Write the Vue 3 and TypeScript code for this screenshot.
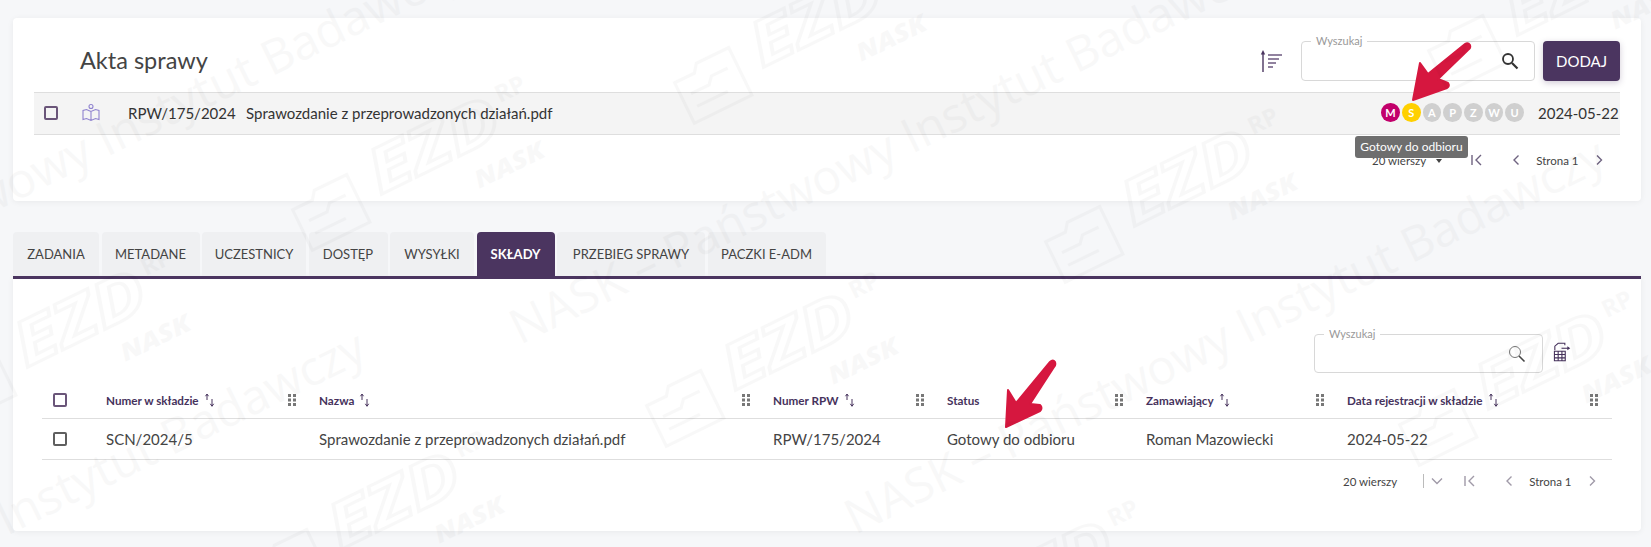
<script setup lang="ts">
interface Mark { x: number; y: number }
interface Line { x: number; y: number }

const tabs = ['ZADANIA', 'METADANE', 'UCZESTNICY', 'DOSTĘP', 'WYSYŁKI', 'SKŁADY', 'PRZEBIEG SPRAWY', 'PACZKI E-ADM']
const activeTab = 'SKŁADY'

const steps = [
  { letter: 'M', state: 'done' },
  { letter: 'S', state: 'current' },
  { letter: 'A', state: '' },
  { letter: 'P', state: '' },
  { letter: 'Z', state: '' },
  { letter: 'W', state: '' },
  { letter: 'U', state: '' },
]

const columns = [
  { label: 'Numer w składzie', sort: true },
  { label: 'Nazwa', sort: true },
  { label: 'Numer RPW', sort: true },
  { label: 'Status', sort: false },
  { label: 'Zamawiający', sort: true },
  { label: 'Data rejestracji w składzie', sort: true },
]

const row = ['SCN/2024/5', 'Sprawozdanie z przeprowadzonych działań.pdf', 'RPW/175/2024', 'Gotowy do odbioru', 'Roman Mazowiecki', '2024-05-22']

// watermark is a free canvas, so these are real coordinates
const lines: Line[] = [
  { x: -285, y: 348 },
  { x: 520, y: 345 },
  { x: 855, y: 535 },
  { x: -385, y: 727 },
]

const marks: Mark[] = [
  { x: 380, y: 195 },
  { x: 762, y: 68 },
  { x: 1133, y: 227 },
  { x: 1516, y: 36 },
  { x: 26, y: 368 },
  { x: 734, y: 391 },
  { x: 1487, y: 410 },
  { x: 340, y: 550 },
  { x: 993, y: 619 },
]
</script>

<template>
  <div class="page">
    <section class="card top-card">
      <header class="top-header">
        <h1 class="title">Akta sprawy</h1>
        <div class="top-tools">
          <svg class="sort-icon" width="24" height="26" viewBox="0 0 24 26">
            <path d="M4 24V4" fill="none" stroke="#4b3560" stroke-width="1.400" />
            <path d="M1.800 6.500 4 2l2.200 4.500z" fill="#4b3560" />
            <path d="M9 7h14M9 11h11M9 15h8M9 19h5" stroke="#6d5a80" stroke-width="1.500" />
          </svg>
          <div class="search search-top">
            <span class="search-label">Wyszukaj</span>
            <svg width="18" height="18" viewBox="0 0 18 18">
              <circle cx="7" cy="7" r="5" fill="none" stroke="#333" stroke-width="1.800" />
              <path d="M11 11l5.500 5.500" stroke="#333" stroke-width="2.200" />
            </svg>
          </div>
          <button class="add-btn">DODAJ</button>
        </div>
      </header>

      <div class="file-row">
        <span class="check check-purple"></span>
        <svg class="book" width="20" height="20" viewBox="0 0 20 20">
          <g fill="none" stroke="#9083cf" stroke-width="1.100">
            <circle cx="10" cy="3.500" r="2" />
            <path d="M10 8.500 5.500 6.500 2 7.500v9l3.500-1 4.500 2 4.500-2 3.500 1v-9l-3.500-1zM10 8.500v9" />
          </g>
        </svg>
        <span class="file-number">RPW/175/2024</span>
        <span class="file-name">Sprawozdanie z przeprowadzonych działań.pdf</span>
        <div class="steps">
          <span v-for="s in steps" :key="s.letter" class="step" :class="s.state">{{ s.letter }}</span>
        </div>
        <span class="file-date">2024-05-22</span>
      </div>

      <div class="pager pager-top">
        <span class="rows">20 wierszy</span>
        <span class="caret"></span>
        <svg class="pg pg-first" width="14" height="14" viewBox="0 0 14 14"><path d="M2 2v10M11 2 6 7l5 5" /></svg>
        <svg class="pg pg-prev" width="14" height="14" viewBox="0 0 14 14"><path d="M9.500 2.500 5 7l4.500 4.500" /></svg>
        <span class="page-no">Strona 1</span>
        <svg class="pg pg-next" width="14" height="14" viewBox="0 0 14 14"><path d="M5 2.500 9.500 7 5 11.500" /></svg>
      </div>

      <div class="tooltip">Gotowy do odbioru</div>
    </section>

    <nav class="tabs">
      <button v-for="t in tabs" :key="t" class="tab" :class="{ active: t === activeTab }">{{ t }}</button>
    </nav>

    <section class="card bottom-card">
      <div class="table-tools">
        <div class="search search-bottom">
          <span class="search-label">Wyszukaj</span>
          <svg width="18" height="18" viewBox="0 0 18 18">
            <circle cx="7" cy="7" r="5.500" fill="none" stroke="#777" stroke-width="1" />
            <path d="M11 11l5.500 5.500" stroke="#444" stroke-width="1.600" />
          </svg>
        </div>
        <svg class="export-icon" width="19" height="20" viewBox="0 0 22 24">
          <g fill="none" stroke="#46325c" stroke-width="1.300">
            <path d="M3 10V5l4-3.500h8V4" />
            <path d="M2.500 11h13v11.500h-13zM2.500 15h13M2.500 19h13M7 11v11.500M11.500 11v11.500" />
            <path d="M11 7.500h9" />
          </g>
          <path d="M18 5l3.500 2.500L18 10z" fill="#46325c" />
        </svg>
      </div>

      <div class="table-row table-head">
        <span class="cell-check"><span class="check check-purple"></span></span>
        <div v-for="c in columns" :key="c.label" class="th">
          <span class="th-label">{{ c.label }}</span>
          <svg v-if="c.sort" class="sort-mini" width="11" height="14" viewBox="0 0 11 14">
            <path d="M3 7V1.500M1.500 3.200 3 1l1.500 2.200" fill="none" stroke="#46325c" stroke-width="1" />
            <path d="M8 6v7M6.300 10.800 8 13.300l1.700-2.500" fill="none" stroke="#46325c" stroke-width="1" />
          </svg>
          <svg class="grip" width="8" height="12" viewBox="0 0 8 12">
            <g fill="#777">
              <rect x="0" y="0" width="3" height="3" /><rect x="5" y="0" width="3" height="3" />
              <rect x="0" y="4.500" width="3" height="3" /><rect x="5" y="4.500" width="3" height="3" />
              <rect x="0" y="9" width="3" height="3" /><rect x="5" y="9" width="3" height="3" />
            </g>
          </svg>
        </div>
      </div>
      <div class="table-row table-body">
        <span class="cell-check"><span class="check check-gray"></span></span>
        <span v-for="(value, i) in row" :key="i" class="td">{{ value }}</span>
      </div>

      <div class="pager pager-bottom">
        <span class="rows">20 wierszy</span>
        <span class="pipe"></span>
        <svg class="pg pg-down" width="14" height="14" viewBox="0 0 14 14"><path d="M2 4.500 7 9.500l5-5" /></svg>
        <svg class="pg pg-first" width="14" height="14" viewBox="0 0 14 14"><path d="M2 2v10M11 2 6 7l5 5" /></svg>
        <svg class="pg pg-prev" width="14" height="14" viewBox="0 0 14 14"><path d="M9.500 2.500 5 7l4.500 4.500" /></svg>
        <span class="page-no">Strona 1</span>
        <svg class="pg pg-next" width="14" height="14" viewBox="0 0 14 14"><path d="M5 2.500 9.500 7 5 11.500" /></svg>
      </div>
    </section>

    <svg class="arrows" width="1651" height="547" viewBox="0 0 1651 547">
      <g fill="#d6173f" stroke="#d6173f" stroke-width="2" stroke-linejoin="round">
        <path d="M1465 44 Q1468 42 1470 45 Q1471 48 1468 50 L1438 79 L1448 83 Q1450 86 1447 88 L1413 100 L1420 63 L1428 74 Z" />
        <path d="M1050 362 Q1053 359 1055 362 Q1056 365 1054 367 L1030 404 L1040 405 Q1043 408 1040 411 L1006 427 L1008 390 L1016 403 Z" />
      </g>
    </svg>

    <svg class="watermark" width="1651" height="547" viewBox="0 0 1651 547">
      <defs>
        <g id="ezd-mark">
          <g fill="none" stroke="#000" stroke-width="3">
            <path d="M-85 20V-25h22l6-8h36v53z" />
            <path d="M-75 -8h20l6-7h18M-75 6h34" />
          </g>
          <text x="0" y="0" class="wm-logo" textLength="140" lengthAdjust="spacingAndGlyphs">EZD</text>
          <text x="148" y="-30" class="wm-rp">RP</text>
          <text x="92" y="38" class="wm-nask" textLength="75" lengthAdjust="spacingAndGlyphs">NASK</text>
        </g>
      </defs>
      <text v-for="l in lines" :key="l.x" class="wm-line" :transform="`translate(${l.x} ${l.y}) rotate(-26)`">NASK – Państwowy Instytut Badawczy</text>
      <use v-for="m in marks" :key="m.x + '-' + m.y" href="#ezd-mark" :transform="`translate(${m.x} ${m.y}) rotate(-26)`" />
    </svg>
  </div>
</template>

<style scoped>
.page {
  position: relative;
  width: 1651px;
  height: 547px;
  overflow: hidden;
  padding: 18px 10px 0 13px;
  box-sizing: border-box;
  background: #f6f7f9;
  font-family: Lato, "Open Sans", sans-serif;
  color: #333;
}

.card {
  background: #fff;
  border-radius: 4px;
  box-shadow: 0 1px 6px rgba(0, 0, 0, 0.06);
}

.top-card {
  position: relative;
  height: 183px;
  padding: 23px 21px 0;
  box-sizing: border-box;
}

.top-header {
  display: flex;
  align-items: center;
  height: 40px;
  padding-left: 46px;
  margin-bottom: 11px;
}

.title {
  margin: 0 0 2px;
  font-size: 23.500px;
  font-weight: 400;
  color: #444;
}

.top-tools {
  margin-left: auto;
  display: flex;
  align-items: center;
}

.sort-icon {
  margin-right: 18px;
}

.search {
  position: relative;
  display: flex;
  align-items: center;
  justify-content: flex-end;
  box-sizing: border-box;
  border: 1px solid #d8d8d8;
  border-radius: 4px;
  background: #fff;
}

.search-label {
  position: absolute;
  left: 9px;
  top: -8px;
  padding: 0 5px;
  background: #fff;
  font-size: 11px;
  color: #999;
}

.search-top {
  width: 234px;
  height: 40px;
  padding-right: 15px;
}

.add-btn {
  width: 77px;
  height: 40px;
  margin-left: 8px;
  border: none;
  border-radius: 4px;
  background: #4b3560;
  color: #fff;
  font-family: inherit;
  font-size: 15px;
  box-shadow: 0 2px 6px rgba(75, 53, 96, 0.25);
}

.file-row {
  display: flex;
  align-items: center;
  height: 43px;
  padding: 0 0 2px 10px;
  box-sizing: border-box;
  background: #f4f4f4;
  border-top: 1px solid #dedede;
  border-bottom: 1px solid #dedede;
  font-size: 15px;
  overflow: hidden;
}

.check {
  display: block;
  box-sizing: border-box;
  width: 14px;
  height: 14px;
  border-radius: 2px;
  border: 2px solid #5b4a6e;
}

.check-purple {
  border-color: #6a5579;
}

.check-gray {
  border-color: #5f5f5f;
}

.book {
  margin-left: 23px;
}

.file-number {
  margin-left: 27px;
  width: 118px;
}

.file-name {
  color: #333;
}

.steps {
  margin-left: auto;
  display: flex;
  gap: 2px;
  margin-right: 14px;
}

.step {
  display: flex;
  align-items: center;
  justify-content: center;
  width: 18.700px;
  height: 19px;
  border-radius: 50%;
  background: #cfcfcf;
  color: #fff;
  font-size: 11px;
  font-weight: 700;
}

.step.done {
  background: #c2006b;
}

.step.current {
  background: #ffd000;
}

.file-date {
  width: 82px;
  white-space: nowrap;
  font-size: 15px;
}

.pager {
  display: flex;
  align-items: center;
  font-size: 11.500px;
  color: #444;
}

.pager-top {
  height: 22px;
  margin-top: 14px;
  padding-left: 1338px;
}

.pg {
  fill: none;
  stroke: #6f6380;
  stroke-width: 1.400;
}

.caret {
  width: 0;
  height: 0;
  margin-left: 10px;
  border: 3.500px solid transparent;
  border-top: 4px solid #444;
  margin-top: 4px;
}

.pager-top .pg-first {
  margin-left: 28px;
}

.pager-top .pg-prev {
  margin-left: 25px;
}

.page-no {
  margin-left: 13px;
}

.pg-next {
  margin-left: 13px;
}

.tooltip {
  position: absolute;
  left: 1342px;
  top: 118px;
  width: 113px;
  height: 22px;
  border-radius: 3px;
  background: #6e6e6e;
  color: #fff;
  font-size: 12px;
  line-height: 22px;
  text-align: center;
}

.tabs {
  display: grid;
  grid-template-columns: 86px 98px 104px 79px 84px 78px 148px 118px;
  gap: 2.500px;
  height: 44px;
  margin-top: 31px;
}

.tab {
  padding: 0;
  border: none;
  border-radius: 4px 4px 0 0;
  background: #eff0f2;
  color: #444;
  font-family: inherit;
  font-size: 13px;
}

.tab.active {
  background: #4b3560;
  color: #fff;
  font-weight: 700;
}

.bottom-card {
  height: 255px;
  border-top: 3px solid #4b3560;
  border-radius: 0 0 4px 4px;
  padding: 55px 29px 0;
  box-sizing: border-box;
}

.table-tools {
  display: flex;
  align-items: center;
  height: 39px;
  padding-left: 1272px;
}

.search-bottom {
  width: 229px;
  height: 39px;
  padding-right: 16px;
}

.export-icon {
  margin-left: 9px;
  margin-top: -3px;
}

.table-row {
  display: grid;
  grid-template-columns: 64px 213px 454px 174px 199px 201px 264px;
  align-items: center;
  border-bottom: 1px solid #dedede;
}

.table-head {
  height: 46px;
  padding-top: 8px;
  box-sizing: border-box;
}

.table-body {
  height: 40px;
  font-size: 15px;
}

.cell-check {
  padding-left: 11px;
}

.th {
  position: relative;
  display: flex;
  align-items: center;
  gap: 5px;
  font-size: 11.700px;
  font-weight: 700;
  color: #46325c;
}

.grip {
  position: absolute;
  right: 23px;
  top: 50%;
  margin-top: -6px;
}

.th:last-child .grip {
  right: 13px;
}

.td {
  white-space: nowrap;
  color: #444;
}

.pager-bottom {
  height: 22px;
  margin-top: 10px;
  padding-left: 1301px;
}

.pipe {
  width: 1px;
  height: 14px;
  margin-left: 26px;
  background: #bbb;
}

.pg-down {
  margin-left: 6px;
}

.pager-bottom .pg {
  stroke: #a09aa8;
}

.pager-bottom .pg-first {
  margin-left: 19px;
}

.pager-bottom .pg-prev {
  margin-left: 25px;
}

.arrows,
.watermark {
  position: absolute;
  left: 0;
  top: 0;
  pointer-events: none;
}

.watermark {
  opacity: 0.024;
}

.wm-line {
  font-size: 48px;
  font-family: "Open Sans", sans-serif;
  fill: #000;
}

.wm-logo {
  font-size: 62px;
  font-weight: 700;
  font-style: italic;
  font-family: "Open Sans", sans-serif;
  fill: none;
  stroke: #000;
  stroke-width: 3px;
}

.wm-rp {
  font-size: 24px;
  font-weight: 700;
  font-family: "Open Sans", sans-serif;
}

.wm-nask {
  font-size: 24px;
  font-weight: 800;
  font-style: italic;
  font-family: "Open Sans", sans-serif;
}
</style>
